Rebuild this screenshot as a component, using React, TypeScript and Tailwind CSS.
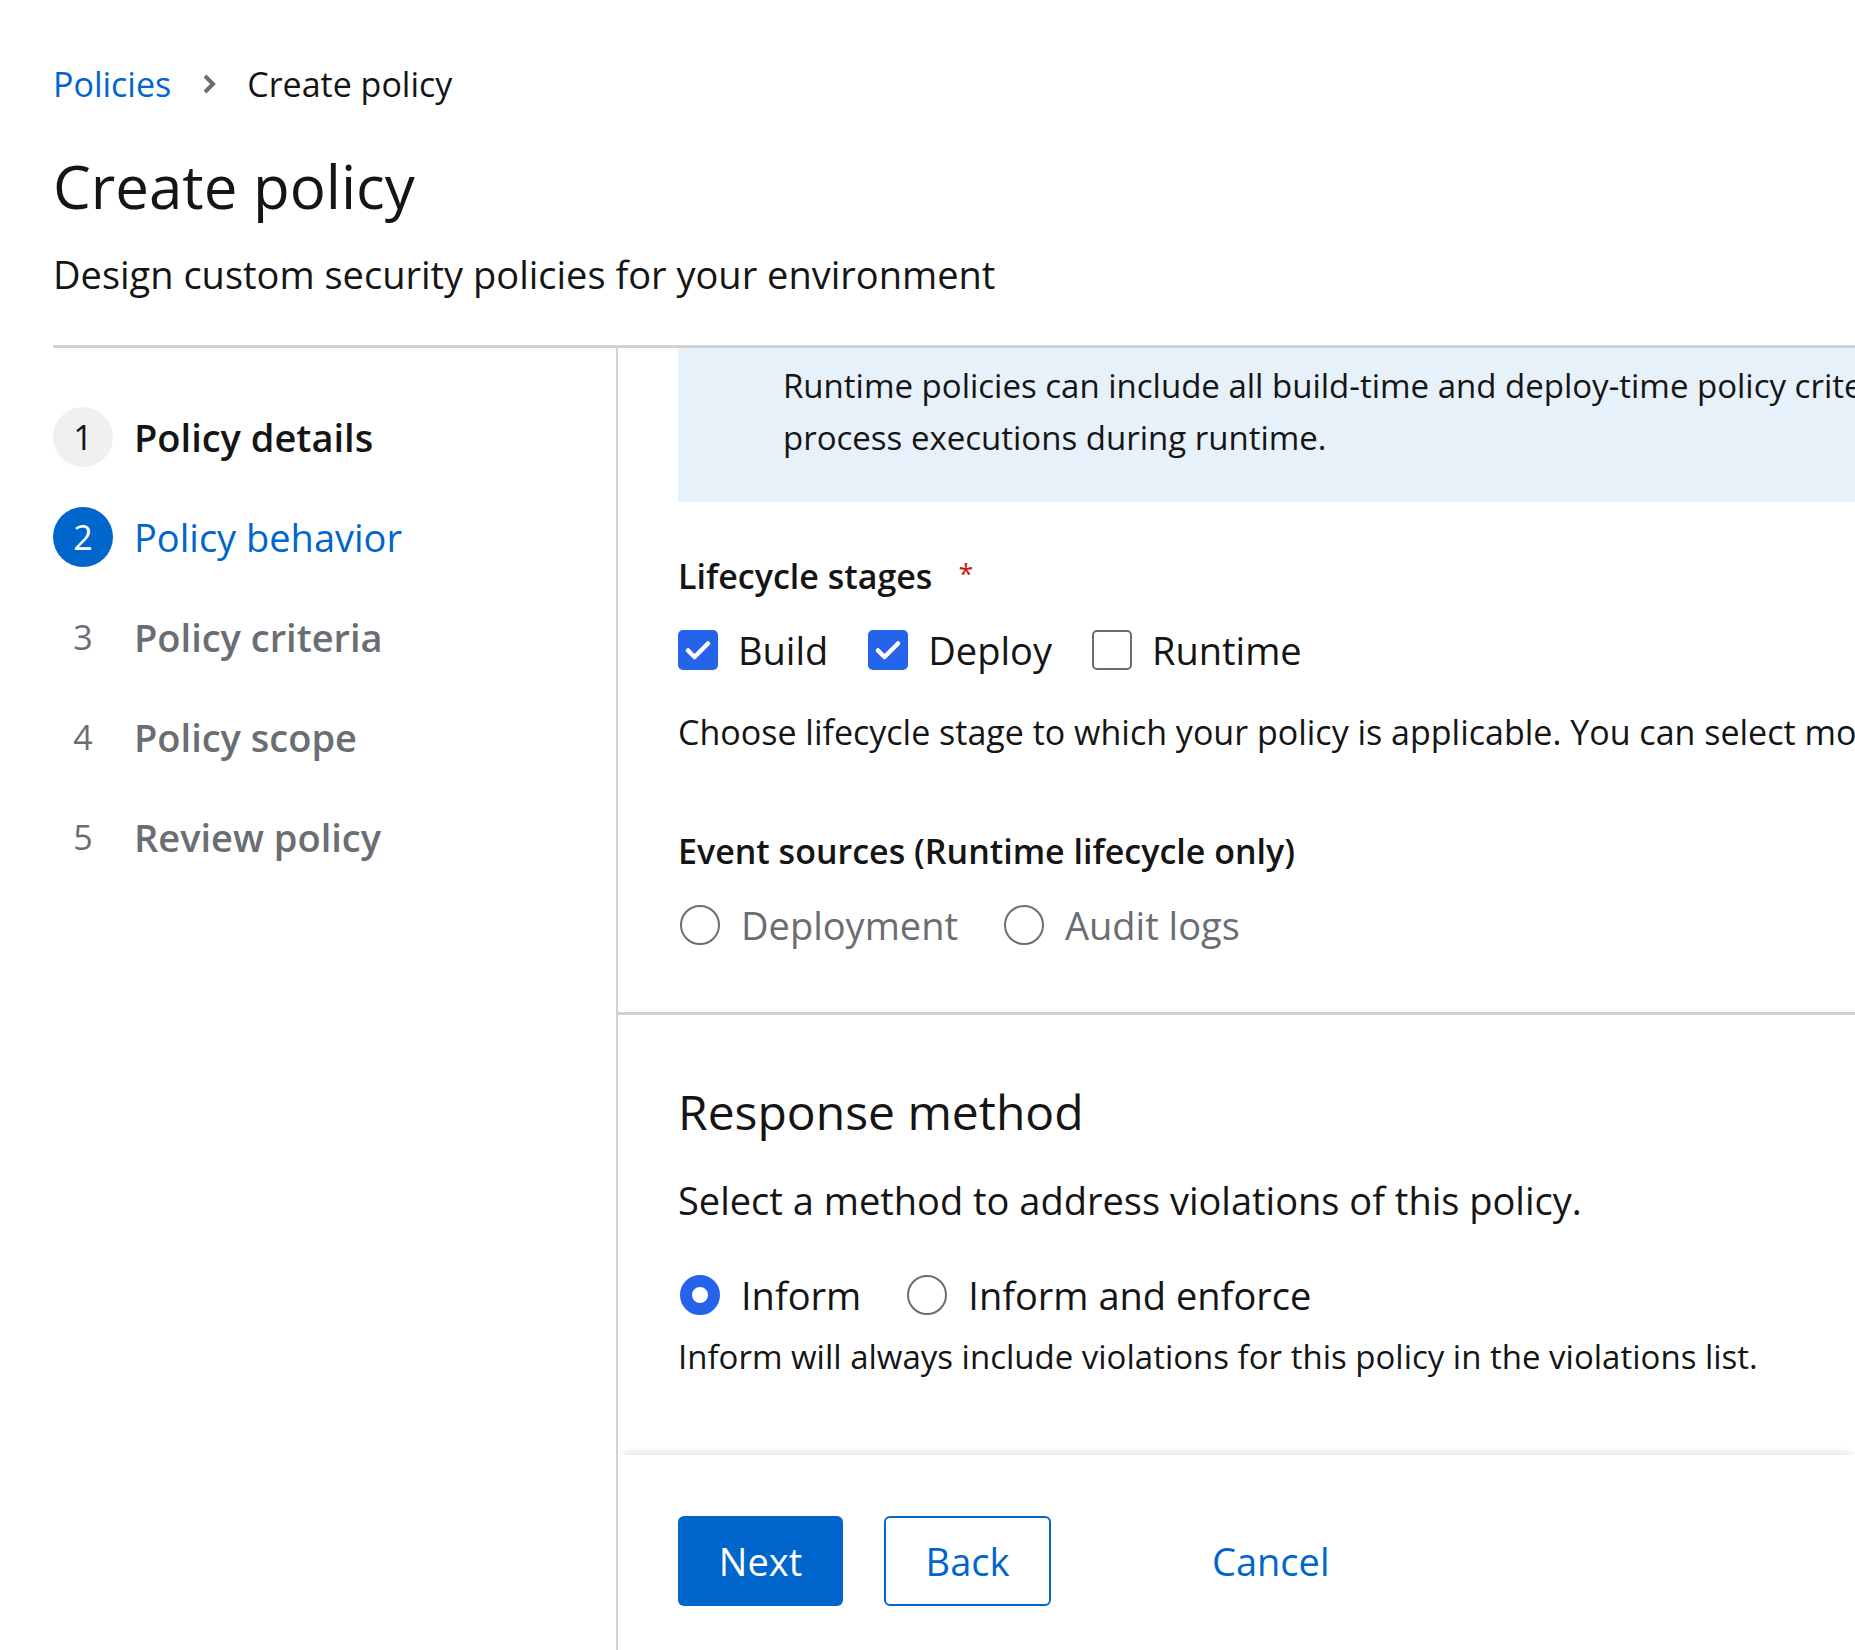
import React from "react";

const font = { fontFamily: "'Open Sans', 'Noto Sans', sans-serif" };

function Check({ checked }: { checked: boolean }) {
  if (!checked) {
    return <span className="h-[40px] w-[40px] shrink-0 rounded-[5px] border-2 border-[#6a6e73] bg-white" />;
  }
  return (
    <span className="flex h-[40px] w-[40px] shrink-0 items-center justify-center rounded-[5px] bg-[#2563eb]">
      <svg viewBox="0 0 40 40" className="h-[40px] w-[40px]">
        <path d="M10 20.5l6.5 6.5L30 13.5" fill="none" stroke="white" strokeWidth="4.5" strokeLinecap="round" strokeLinejoin="round" />
      </svg>
    </span>
  );
}

function Radio({ checked }: { checked: boolean }) {
  if (checked) {
    return <span className="ml-[2px] h-[40px] w-[40px] shrink-0 rounded-full border-[12px] border-[#2563eb] bg-white" />;
  }
  return <span className="ml-[2px] h-[40px] w-[40px] shrink-0 rounded-full border-2 border-[#6a6e73] bg-white" />;
}

const steps = [
  { n: 1, label: "Policy details", state: "done" },
  { n: 2, label: "Policy behavior", state: "current" },
  { n: 3, label: "Policy criteria", state: "todo" },
  { n: 4, label: "Policy scope", state: "todo" },
  { n: 5, label: "Review policy", state: "todo" },
];

export default function App() {
  return (
    <div className="h-[1650px] w-full overflow-hidden bg-white text-[#151515]" style={font}>
      <div className="pl-[53px] pt-[60px]">
        <nav className="flex h-[48px] items-center text-[34px] leading-[48px]">
          <span className="text-[#0066cc]">Policies</span>
          <svg viewBox="0 0 16 22" className="mx-[30px] h-[22px] w-[16px]">
            <path d="M4 3l8 8-8 8" fill="none" stroke="#6a6e73" strokeWidth="4" />
          </svg>
          <span>Create policy</span>
        </nav>
        <h1 className="mt-[42px] text-[60px] font-medium leading-[72px]">Create policy</h1>
        <p className="mt-[26px] text-[38px] leading-[52px]">Design custom security policies for your environment</p>
      </div>

      <div className="ml-[53px] mt-[45px] flex h-[1310px] border-t-[3px] border-[#d2d2d2]">
        <aside className="w-[565px] shrink-0 border-r-2 border-[#d2d2d2] pt-[59px]">
          <ol className="flex flex-col gap-[40px]">
            {steps.map((s) => (
              <li key={s.n} className="flex h-[60px] items-center">
                <span
                  className={
                    s.state === "done"
                      ? "flex h-[60px] w-[60px] items-center justify-center rounded-full bg-[#f0f0f0] text-[34px] text-[#151515]"
                      : s.state === "current"
                        ? "flex h-[60px] w-[60px] items-center justify-center rounded-full bg-[#0066cc] text-[34px] text-white"
                        : "flex h-[60px] w-[60px] items-center justify-center rounded-full text-[34px] text-[#6a6e73]"
                  }
                >
                  {s.n}
                </span>
                <span
                  className={
                    s.state === "done"
                      ? "ml-[21px] text-[38px] font-semibold text-[#151515]"
                      : s.state === "current"
                        ? "ml-[21px] text-[38px] text-[#0066cc]"
                        : "ml-[21px] text-[38px] font-semibold text-[#6a6e73]"
                  }
                >
                  {s.label}
                </span>
              </li>
            ))}
          </ol>
        </aside>

        <main className="flex min-w-0 flex-1 flex-col overflow-hidden">
          <section className="border-b-[3px] border-[#d2d2d2] pb-[63px] pl-[60px]">
            <div className="h-[154px] w-[1600px] bg-[#e7f1fa] pl-[105px] pt-[12px] text-[33px] leading-[52px]">
              <div className="whitespace-nowrap">
                Runtime policies can include all build-time and deploy-time policy criteria but must include at least one runtime criterion from
              </div>
              <div className="whitespace-nowrap">process executions during runtime.</div>
            </div>

            <div className="mt-[50px] flex h-[48px] items-center text-[34px] font-semibold leading-[48px]">
              Lifecycle stages
              <span className="relative -top-[2px] ml-[26px] text-[27px] font-normal text-[#c9190b]">*</span>
            </div>

            <div className="mt-[26px] flex h-[48px] items-center gap-[40px] text-[38px]">
              {[
                ["Build", true],
                ["Deploy", true],
                ["Runtime", false],
              ].map(([label, on]) => (
                <label key={label as string} className="flex items-center gap-[20px]">
                  <Check checked={on as boolean} />
                  <span>{label as string}</span>
                </label>
              ))}
            </div>

            <p className="mt-[34px] whitespace-nowrap text-[34px] leading-[48px] text-[#151515]">
              Choose lifecycle stage to which your policy is applicable. You can select more than one stage.
            </p>

            <div className="mt-[71px] text-[34px] font-semibold leading-[48px]">Event sources (Runtime lifecycle only)</div>

            <div className="mt-[26px] flex h-[48px] items-center gap-[44px] text-[38px] text-[#6a6e73]">
              <label className="flex items-center gap-[21px]">
                <Radio checked={false} />
                <span>Deployment</span>
              </label>
              <label className="flex items-center gap-[21px]">
                <Radio checked={false} />
                <span>Audit logs</span>
              </label>
            </div>
          </section>

          <section className="pb-[74px] pl-[60px] pt-[67px]">
            <h2 className="text-[48px] font-medium leading-[60px]">Response method</h2>
            <p className="mt-[32px] text-[38px] leading-[52px]">Select a method to address violations of this policy.</p>
            <div className="mt-[45px] flex h-[48px] items-center gap-[44px] text-[38px]">
              <label className="flex items-center gap-[21px]">
                <Radio checked />
                <span>Inform</span>
              </label>
              <label className="flex items-center gap-[21px]">
                <Radio checked={false} />
                <span>Inform and enforce</span>
              </label>
            </div>
            <p className="mt-[14px] whitespace-nowrap text-[33px] leading-[48px]">
              Inform will always include violations for this policy in the violations list.
            </p>
          </section>

          <footer className="flex flex-1 items-start pl-[60px] pt-[61px] shadow-[0_-6px_8px_-4px_rgba(0,0,0,0.12)]">
            <button className="h-[90px] w-[165px] rounded-[6px] bg-[#0066cc] text-[38px] text-white">Next</button>
            <button className="ml-[41px] h-[90px] w-[167px] rounded-[6px] border-2 border-[#0066cc] text-[38px] text-[#0066cc]">
              Back
            </button>
            <button className="ml-[121px] h-[90px] px-[40px] text-[38px] text-[#0066cc]">Cancel</button>
          </footer>
        </main>
      </div>
    </div>
  );
}
